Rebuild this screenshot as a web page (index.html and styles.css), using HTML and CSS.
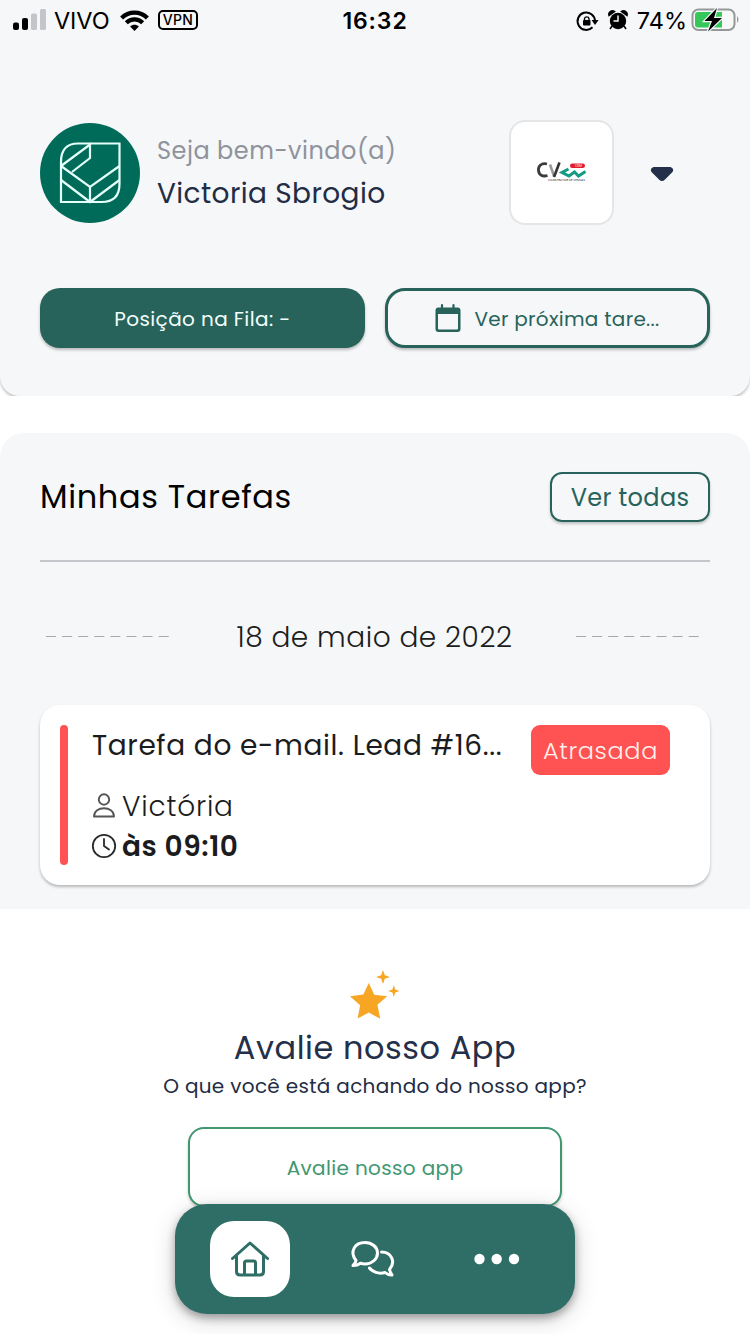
FILE: index.html
```html
<!DOCTYPE html>
<html lang="pt-BR">
<head>
<meta charset="utf-8">
<title>Início</title>
<link rel="stylesheet" href="styles.css">
</head>
<body>
<div class="screen">
  <div class="header-clip">
    <header class="header">
      <div class="status">
        <div class="status-side">
          <svg class="signal" width="34" height="22" viewBox="0 0 34 22"><rect x="0" y="13.500" width="6" height="7.500" rx="2"/><rect x="9" y="9" width="6" height="12" rx="2"/><g fill="#c4c5c8"><rect x="18" y="4.500" width="6" height="16.500" rx="1.500"/><rect x="27" y="0" width="6" height="21" rx="1.500"/></g></svg>
          <span class="carrier">VIVO</span>
          <svg class="wifi" width="29" height="21" viewBox="0 0 30 22"><g fill="none" stroke="#000" stroke-width="4.400"><path d="M1.500 8.300C9 .8 21 .8 28.500 8.300"/><path d="M6.400 13.400C11.300 8.700 18.700 8.700 23.600 13.400"/></g><path d="M15 22l-4.600-4.700c2.600-2.300 6.600-2.300 9.200 0z"/></svg>
          <span class="vpn">VPN</span>
        </div>
        <span class="clock">16:32</span>
        <div class="status-side right">
          <svg class="lock" width="22" height="20" viewBox="0 0 22 20"><path d="M15.500 16.300A8.700 8.700 0 1 1 18 10" fill="none" stroke="#000" stroke-width="2"/><path d="M14.600 9h7L18 14z"/><rect x="6" y="9" width="7.500" height="5.500" rx="1"/><path d="M7.500 9.500V7.700a2.300 2.300 0 0 1 4.500 0v1.800" fill="none" stroke="#000" stroke-width="1.400"/></svg>
          <svg class="alarm" width="20" height="20" viewBox="0 0 20 20"><circle cx="10" cy="11" r="8.200"/><path d="M1 5.500C0 2 3.500-.2 6.500 1.500zM19 5.500C20 2 16.500-.2 13.500 1.500zM4 16l-2 3M16 16l2 3" stroke="#000" stroke-width="1.500"/><path d="M10 5.500V11H5.500" fill="none" stroke="#f5f6f8" stroke-width="1.500"/></svg>
          <span class="percent">74%</span>
          <svg class="battery" width="50" height="24" viewBox="0 0 50 24"><rect x="1.500" y="1.500" width="42" height="20.500" rx="6" fill="#f7f8f8" stroke="#96999a" stroke-width="2"/><path d="M7 4h24v15.500H7q-3 0-3-3V7q0-3 3-3z" fill="#35c759"/><path d="M46 8q3 3.500 0 7z" fill="#96999a"/><path d="M26 0L13.500 13h7.500l-4 10.500L31 10h-8z" fill="#000" stroke="#f5f6f8" stroke-width="2.400" paint-order="stroke"/></svg>
        </div>
      </div>
      <div class="profile">
        <svg class="avatar" width="100" height="100" viewBox="0 0 100 100"><circle cx="50" cy="50" r="50" fill="#006b59"/><g fill="none" stroke="#e5fffa" stroke-width="2.200"><path d="M38 20.500H79.500V61q0 18-18 18H21V39q0-18.500 17-18.500z"/><path d="M21 43L50 21.500V35L32 49M21 43L50 64 79.500 43M21 57L50 79 79.500 57M50 64V79"/></g></svg>
        <div class="names"><span class="welcome"><i class="t t1">Seja bem-vindo(a)</i></span><span class="user"><i class="t t2">Victoria Sbrogio</i></span></div>
        <div class="company">
          <svg width="50" height="22" viewBox="0 0 50 22"><g fill="none"><path d="M10 3C4 1.500 1 5.500 1.500 9.500c.5 4.500 4 6.500 9 5" stroke="#3b3b3b" stroke-width="2.800"/><path d="M13 3.500l4 11.500" stroke="#999" stroke-width="2.600"/><path d="M17 16L22.500 1.500" stroke="#333" stroke-width="2.600"/><path d="M31.500 8l-6.500 3.500 7 3.500 5.500-4 4 4 7-4.500" stroke="#159a83" stroke-width="3"/></g><rect x="33" y="2.500" width="15" height="4.500" rx="2.200" fill="#e21b2c"/><text x="38" y="5.800" class="logo-tag">CRM</text><text x="11" y="20" textLength="37" class="logo-line">CONSTRUTOR DE VENDAS</text></svg>
        </div>
        <svg class="caret" width="24" height="16" viewBox="0 0 24 16"><path d="M3.500 1h17q4 1.500 2 5l-7.500 7.500q-3 3-6 0L1.500 6Q-.5 2.500 3.500 1z" fill="#24304a"/></svg>
      </div>
      <div class="actions">
        <div class="btn solid"><i class="t t3">Posição na Fila: -</i></div>
        <div class="btn outline"><svg width="26" height="28" viewBox="0 0 26 28"><path d="M3.500 3.500h19a3 3 0 0 1 3 3V25q0 3-3 3h-19q-3 0-3-3V6.500a3 3 0 0 1 3-3zM3 10v14.500q0 1 1 1h18q1 0 1-1V10z" fill="#27635a" fill-rule="evenodd"/><path d="M7 1v5M18.500 1v5" stroke="#27635a" stroke-width="2.200" stroke-linecap="round"/></svg><i class="t t4">Ver próxima tare...</i></div>
      </div>
    </header>
  </div>

  <section class="tasks">
    <div class="tasks-head"><h2><i class="t t5">Minhas Tarefas</i></h2><div class="all"><i class="t t6">Ver todas</i></div></div>
    <div class="date">
      <svg width="124" height="2"><path d="M0 .5H123" stroke="#a5a7aa" stroke-width="1" stroke-dasharray="10 6.100"/></svg>
      <i class="t t7">18 de maio de 2022</i>
      <svg width="124" height="2"><path d="M0 .5H123" stroke="#a5a7aa" stroke-width="1" stroke-dasharray="10 6.100"/></svg>
    </div>
    <article class="card">
      <div class="bar"></div>
      <div class="info">
        <div class="title"><i class="t t8">Tarefa do e-mail. Lead #16...</i></div>
        <div class="row"><svg width="26" height="26" viewBox="0 0 26 26" fill="none" stroke="#555" stroke-width="1.900"><circle cx="12" cy="6.500" r="5.200"/><path d="M2 23.500C2 12.500 22 12.500 22 23.500z" stroke-linejoin="round"/></svg><i class="t t9">Victória</i></div>
        <div class="row time"><svg width="26" height="26" viewBox="0 0 26 26" fill="none" stroke="#292a2c" stroke-width="1.800"><circle cx="12" cy="13" r="11.200"/><path d="M12 6v7l5 3.500" stroke-linecap="round"/></svg><i class="t t10">às 09:10</i></div>
      </div>
      <div class="badge"><i class="t t11">Atrasada</i></div>
    </article>
  </section>

  <section class="rate">
    <svg width="50" height="50" viewBox="0 0 50 50" fill="#f6a623"><path d="M18.800 13l5.400 11.800 13 1.400-9.800 8.600 2.800 14-11.400-6.300-11.200 6 2.500-13.300L0 26.200l13.300-1.600zM33 0l1.800 5.200L40 7l-5.200 1.800L33 14l-1.800-5.200L26 7l5.200-1.800zM43.800 15l1.400 4.500 4.300 1.500-4.300 1.500-1.400 4.500-1.400-4.500-4.300-1.500 4.300-1.500z"/></svg>
    <h3><i class="t t12">Avalie nosso App</i></h3>
    <p><i class="t t13">O que você está achando do nosso app?</i></p>
    <div class="rate-btn"><i class="t t14">Avalie nosso app</i></div>
  </section>

  <nav class="nav">
    <div class="tab active"><svg width="40" height="38" viewBox="0 0 40 38" fill="none" stroke="#2f6e66" stroke-width="3" stroke-linecap="round" stroke-linejoin="round"><path d="M2.500 18.500L20 3l17.500 15.500M6.500 16v15.500q0 3.500 3.500 3.500h20q3.500 0 3.500-3.500V16M14.500 34.500V23q0-2 2-2h7q2 0 2 2v11.500"/></svg></div>
    <div class="tab"><svg width="44" height="38" viewBox="0 0 44 38" fill="none" stroke="#fff" stroke-width="3" stroke-linejoin="round" stroke-linecap="round"><path d="M5 20.500C-2 11.500 4 2.500 14 2.500c7 0 12.500 4.500 12.500 10.500S21 24 14 24q-2.500 0-4.500-.8-3.500 2.500-7.500 2.300 2.500-2.200 3-5z"/><path d="M30.500 12c10 0 14.500 10 8 17.500q.8 3.300 2.500 5.500-4 .2-7-2.500C27.500 34.300 21.500 32 18.500 28"/></svg></div>
    <div class="tab"><svg width="46" height="12" viewBox="0 0 46 12" fill="#fff"><circle cx="7.500" cy="6" r="5.200"/><circle cx="24.700" cy="6" r="5.200"/><circle cx="42" cy="6" r="5.200"/></svg></div>
  </nav>
</div>
</body>
</html>
```

FILE: styles.css
```css
* { box-sizing: border-box; }
body { margin: 0; background: #fff; font-family: Poppins, Inter, "Open Sans", sans-serif; }
svg { display: block; flex: none; overflow: visible; }
.screen { position: relative; width: 750px; height: 1334px; overflow: hidden; background: #fff; display: flex; flex-direction: column; }
.header-clip { height: 396px; overflow: hidden; flex: none; }
.header { height: 396px; background: #f5f7f9; border-radius: 0 0 20px 20px; box-shadow: 0 2px 3px rgba(0,0,0,.25); }
.t { font-style: normal; white-space: nowrap; display: block; }

.status { height: 40px; padding: 0 10px 0 13px; display: grid; grid-template-columns: 1fr auto 1fr; align-items: center; font-family: Inter, sans-serif; color: #000; }
.status-side { display: flex; align-items: center; }
.right { justify-content: flex-end; }
.carrier { font-size: 23.500px; margin-left: 7px; width: 57px; letter-spacing: -.1px; padding-top: 1px; }
.wifi { margin-left: 9px; }
.vpn { margin-left: 9px; width: 40px; height: 20px; border: 2px solid #000; border-radius: 5px; font-size: 14px; font-weight: 500; line-height: 16px; text-align: center; letter-spacing: .4px; }
.clock { font-size: 23px; font-weight: 600; letter-spacing: .9px; margin-left: -3px; padding-top: 2px; }
.lock { margin-top: 2px; }
.alarm { margin-left: 9px; }
.percent { font-size: 23.500px; margin-left: 9px; padding-top: 1px; }
.battery { margin-left: 4px; margin-right: -1px; }

.profile { height: 104px; margin-top: 80px; padding: 0 76px 0 40px; display: flex; align-items: center; }
.avatar { margin-top: 1px; }
.names { margin-left: 17px; width: 352px; padding-top: 2px; display: flex; flex-direction: column; }
.welcome { font-size: 24px; line-height: 40px; color: #8e939c; }
.user { font-size: 28px; line-height: 45px; color: #222c44; }
.company { width: 105px; height: 105px; border: 2px solid #e3e5e7; border-radius: 16px; background: #fff; display: flex; align-items: center; justify-content: center; }
.logo-tag { font-size: 3px; fill: #fff; }
.logo-line { font-size: 3px; fill: #555; font-weight: 500; }
.caret { margin: 3px 0 0 auto; }

.actions { display: grid; grid-template-columns: 1fr 1fr; gap: 20px; padding: 64px 40px 0; }
.btn { height: 60px; border-radius: 20px; display: flex; align-items: center; justify-content: center; box-shadow: 0 2px 3px rgba(0,0,0,.25); font-size: 20px; }
.btn .t, .rate-btn .t { padding-top: 2px; }
.solid { background: #27635a; color: #f2fffc; }
.outline { background: #f5f7f9; border: 3px solid #27635a; color: #27635a; gap: 13px; }

.tasks { margin-top: 37px; height: 476px; flex: none; background: #f5f7f9; border-radius: 24px 24px 0 0; padding: 39px 40px 0; }
.tasks-head { display: flex; justify-content: space-between; height: 90px; border-bottom: 2px solid #c4c6cc; }
h2 { margin: 0; font-size: 32px; line-height: 50px; font-weight: 400; color: #000; }
.all { width: 160px; height: 50px; border: 2px solid #27635a; border-radius: 12px; color: #27635a; font-size: 24px; display: flex; align-items: center; justify-content: center; box-shadow: 0 2px 3px rgba(0,0,0,.22); }
.date { height: 150px; display: flex; justify-content: space-between; align-items: center; padding: 0 10px 0 6px; font-size: 28px; color: #1c1d20; }
.date .t { padding: 2px 0 0 3px; }
.card { margin-top: -7px; height: 180px; border-radius: 20px; background: #fff; box-shadow: 0 2px 3px rgba(0,0,0,.26); display: flex; padding: 20px 40px 20px 20px; color: #1b1c20; }
.bar { width: 8px; border-radius: 4px; background: #ff5252; }
.info { margin-left: 24px; width: 439px; font-size: 28px; }
.row .t { padding-top: 3px; }
.title { line-height: 40px; height: 60px; }
.title .t { padding-top: 1px; }
.row { display: flex; align-items: center; gap: 4px; height: 40px; }
.row svg { margin-top: 1px; }
.time { font-weight: 600; }
.badge { width: 139px; height: 50px; border-radius: 9px; background: #ff5252; color: #fff0ec; font-size: 24px; font-weight: 300; display: flex; align-items: center; justify-content: center; }

.rate { display: flex; flex-direction: column; align-items: center; padding-top: 61px; color: #24304a; }
h3 { margin: 4px 0 0; font-size: 32px; line-height: 48px; font-weight: 400; }
.rate p { margin: 0; font-size: 20px; line-height: 28px; color: #222c44; }
.rate-btn { margin-top: 27px; width: 374px; height: 80px; border: 2px solid #419771; border-radius: 16px; color: #419771; font-size: 20px; display: flex; align-items: center; justify-content: center; box-shadow: 0 2px 3px rgba(0,0,0,.2); background: #fff; }

.nav { position: absolute; left: 175px; top: 1204px; width: 400px; height: 110px; border-radius: 32px; background: #2f6e66; box-shadow: 0 4px 8px rgba(0,0,0,.32), 0 6px 24px rgba(0,0,0,.17); display: grid; grid-template-columns: 80px 80px 80px; justify-content: space-between; align-items: center; padding: 0 40px 0 35px; }
.tab { height: 76px; border-radius: 24px; display: flex; align-items: center; justify-content: center; }
.active { background: #fff; }

.t1 { letter-spacing: .5px; }
.t2 { letter-spacing: .4px; }
.t3 { letter-spacing: .4px; }
.t4 { letter-spacing: .28px; }
.t6, .t14 { letter-spacing: .35px; }
.t13 { letter-spacing: .32px; }
.t5 { letter-spacing: .65px; }
.t7 { letter-spacing: .55px; font-weight: 300; }
.t9 { letter-spacing: .8px; font-weight: 300; }
.t8 { letter-spacing: .62px; }
.t12 { letter-spacing: .55px; }
.t10 { letter-spacing: .55px; }
.t11 { letter-spacing: .65px; }
```
